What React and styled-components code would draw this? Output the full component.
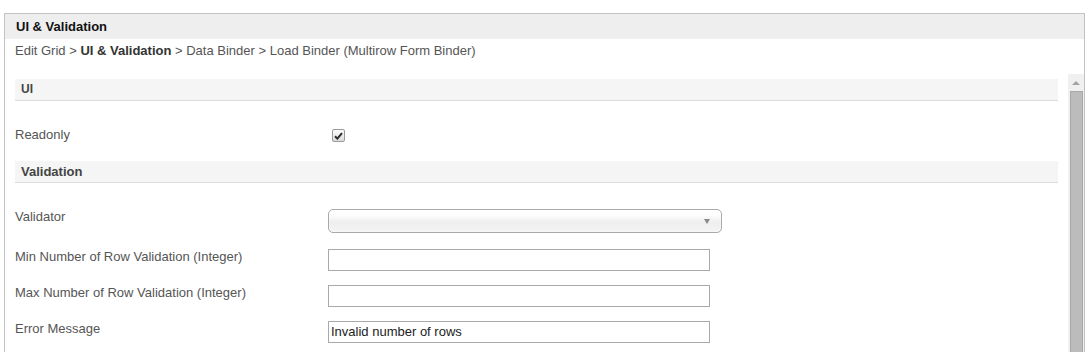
import React from "react";
import styled, { createGlobalStyle } from "styled-components";

const GlobalStyle = createGlobalStyle`
  html, body {
    margin: 0;
    padding: 0;
    background: #fff;
    overflow: hidden;
  }
  body {
    font-family: "Liberation Sans", Arial, sans-serif;
    font-size: 13px;
    color: #555;
  }
`;

const Panel = styled.div`
  margin: 13px 7px 0 4px;
  height: 420px;
  border: 1px solid #c2c2c2;
  border-bottom: none;
  display: flex;
  flex-direction: column;
  background: #fff;
`;

const TitleBar = styled.div`
  height: 25px;
  background: #eeeeee;
  padding-left: 11px;
  display: flex;
  align-items: center;
  font-weight: bold;
  font-size: 13px;
  color: #111;
`;

const Breadcrumb = styled.div`
  padding: 4px 10px 0;
  height: 30px;
  line-height: 16px;
  color: #555;

  b {
    color: #333;
  }
`;

const Body = styled.div`
  flex: 1;
  display: flex;
  min-height: 0;
`;

const Content = styled.div`
  flex: 1;
  padding: 6px 10px 0 10px;
`;

const SectionHeader = styled.div`
  height: 21px;
  line-height: 21px;
  background: #f5f5f5;
  border-bottom: 1px solid #dcdcdc;
  padding-left: 6px;
  font-weight: bold;
  font-size: ${(p) => (p.$small ? "12px" : "13px")};
  color: #444;
  margin-bottom: 25px;
`;

const Row = styled.div`
  display: flex;
  align-items: flex-start;
  height: ${(p) => p.$h}px;
`;

const Label = styled.div`
  width: 313px;
  padding-top: 1px;
  line-height: 16px;
  color: #555;
`;

const TextInput = styled.div`
  box-sizing: border-box;
  margin-top: 1px;
  width: 382px;
  height: 22px;
  border: 1px solid #a9a9a9;
  padding: 0 2px;
  line-height: 20px;
  color: #222;
  background: #fff;
`;

const Select = styled.div`
  position: relative;
  box-sizing: border-box;
  margin-top: 1px;
  width: 394px;
  height: 24px;
  border: 1px solid #aaa;
  border-radius: 5px;
  background: linear-gradient(#ffffff 20%, #eeeeee 55%, #f4f4f4 100%);
  box-shadow: 0 0 2px #fff inset;
`;

const Arrow = styled.span`
  position: absolute;
  right: 11px;
  top: 9px;
  width: 0;
  height: 0;
  border-left: 3.5px solid transparent;
  border-right: 3.5px solid transparent;
  border-top: 5px solid #888;
`;

const CheckBox = styled.span`
  box-sizing: border-box;
  margin: 3px 0 0 4px;
  width: 13px;
  height: 13px;
  border: 1px solid #9a9a9a;
  border-radius: 2px;
  background: linear-gradient(#fcfcfc, #dcdcdc);
  display: flex;
  align-items: center;
  justify-content: center;
`;

const ScrollTrack = styled.div`
  width: 16px;
  margin-top: 1px;
  background: #f0f0f0;
  display: flex;
  flex-direction: column;
  align-items: center;
`;

const ScrollUp = styled.div`
  height: 17px;
  display: flex;
  align-items: center;
  justify-content: center;

  &::before {
    content: "";
    border-left: 4px solid transparent;
    border-right: 4px solid transparent;
    border-bottom: 4px solid #a3a3a3;
  }
`;

const ScrollThumb = styled.div`
  box-sizing: border-box;
  width: 13px;
  flex: 1;
  background: #bcbcbc;
  border: 1px solid #a8a8a8;
`;

const Field = ({ label, h, children }) => (
  <Row $h={h}>
    <Label>{label}</Label>
    {children}
  </Row>
);

export default function App() {
  return (
    <>
      <GlobalStyle />
      <Panel>
        <TitleBar>UI &amp; Validation</TitleBar>
        <Breadcrumb>
          Edit Grid &gt; <b>UI &amp; Validation</b> &gt; Data Binder &gt; Load Binder (Multirow Form Binder)
        </Breadcrumb>
        <Body>
          <Content>
            <SectionHeader $small>UI</SectionHeader>
            <Field label="Readonly" h={35}>
              <CheckBox>
                <svg width="9" height="8" viewBox="0 0 9 8">
                  <path d="M1 4.2 L3.4 6.6 L8 1.2" fill="none" stroke="#2b2b2b" strokeWidth="2" />
                </svg>
              </CheckBox>
            </Field>
            <SectionHeader>Validation</SectionHeader>
            <Field label="Validator" h={40}>
              <Select>
                <Arrow />
              </Select>
            </Field>
            <Field label="Min Number of Row Validation (Integer)" h={36}>
              <TextInput />
            </Field>
            <Field label="Max Number of Row Validation (Integer)" h={36}>
              <TextInput />
            </Field>
            <Field label="Error Message" h={36}>
              <TextInput>Invalid number of rows</TextInput>
            </Field>
          </Content>
          <ScrollTrack>
            <ScrollUp />
            <ScrollThumb />
          </ScrollTrack>
        </Body>
      </Panel>
    </>
  );
}
